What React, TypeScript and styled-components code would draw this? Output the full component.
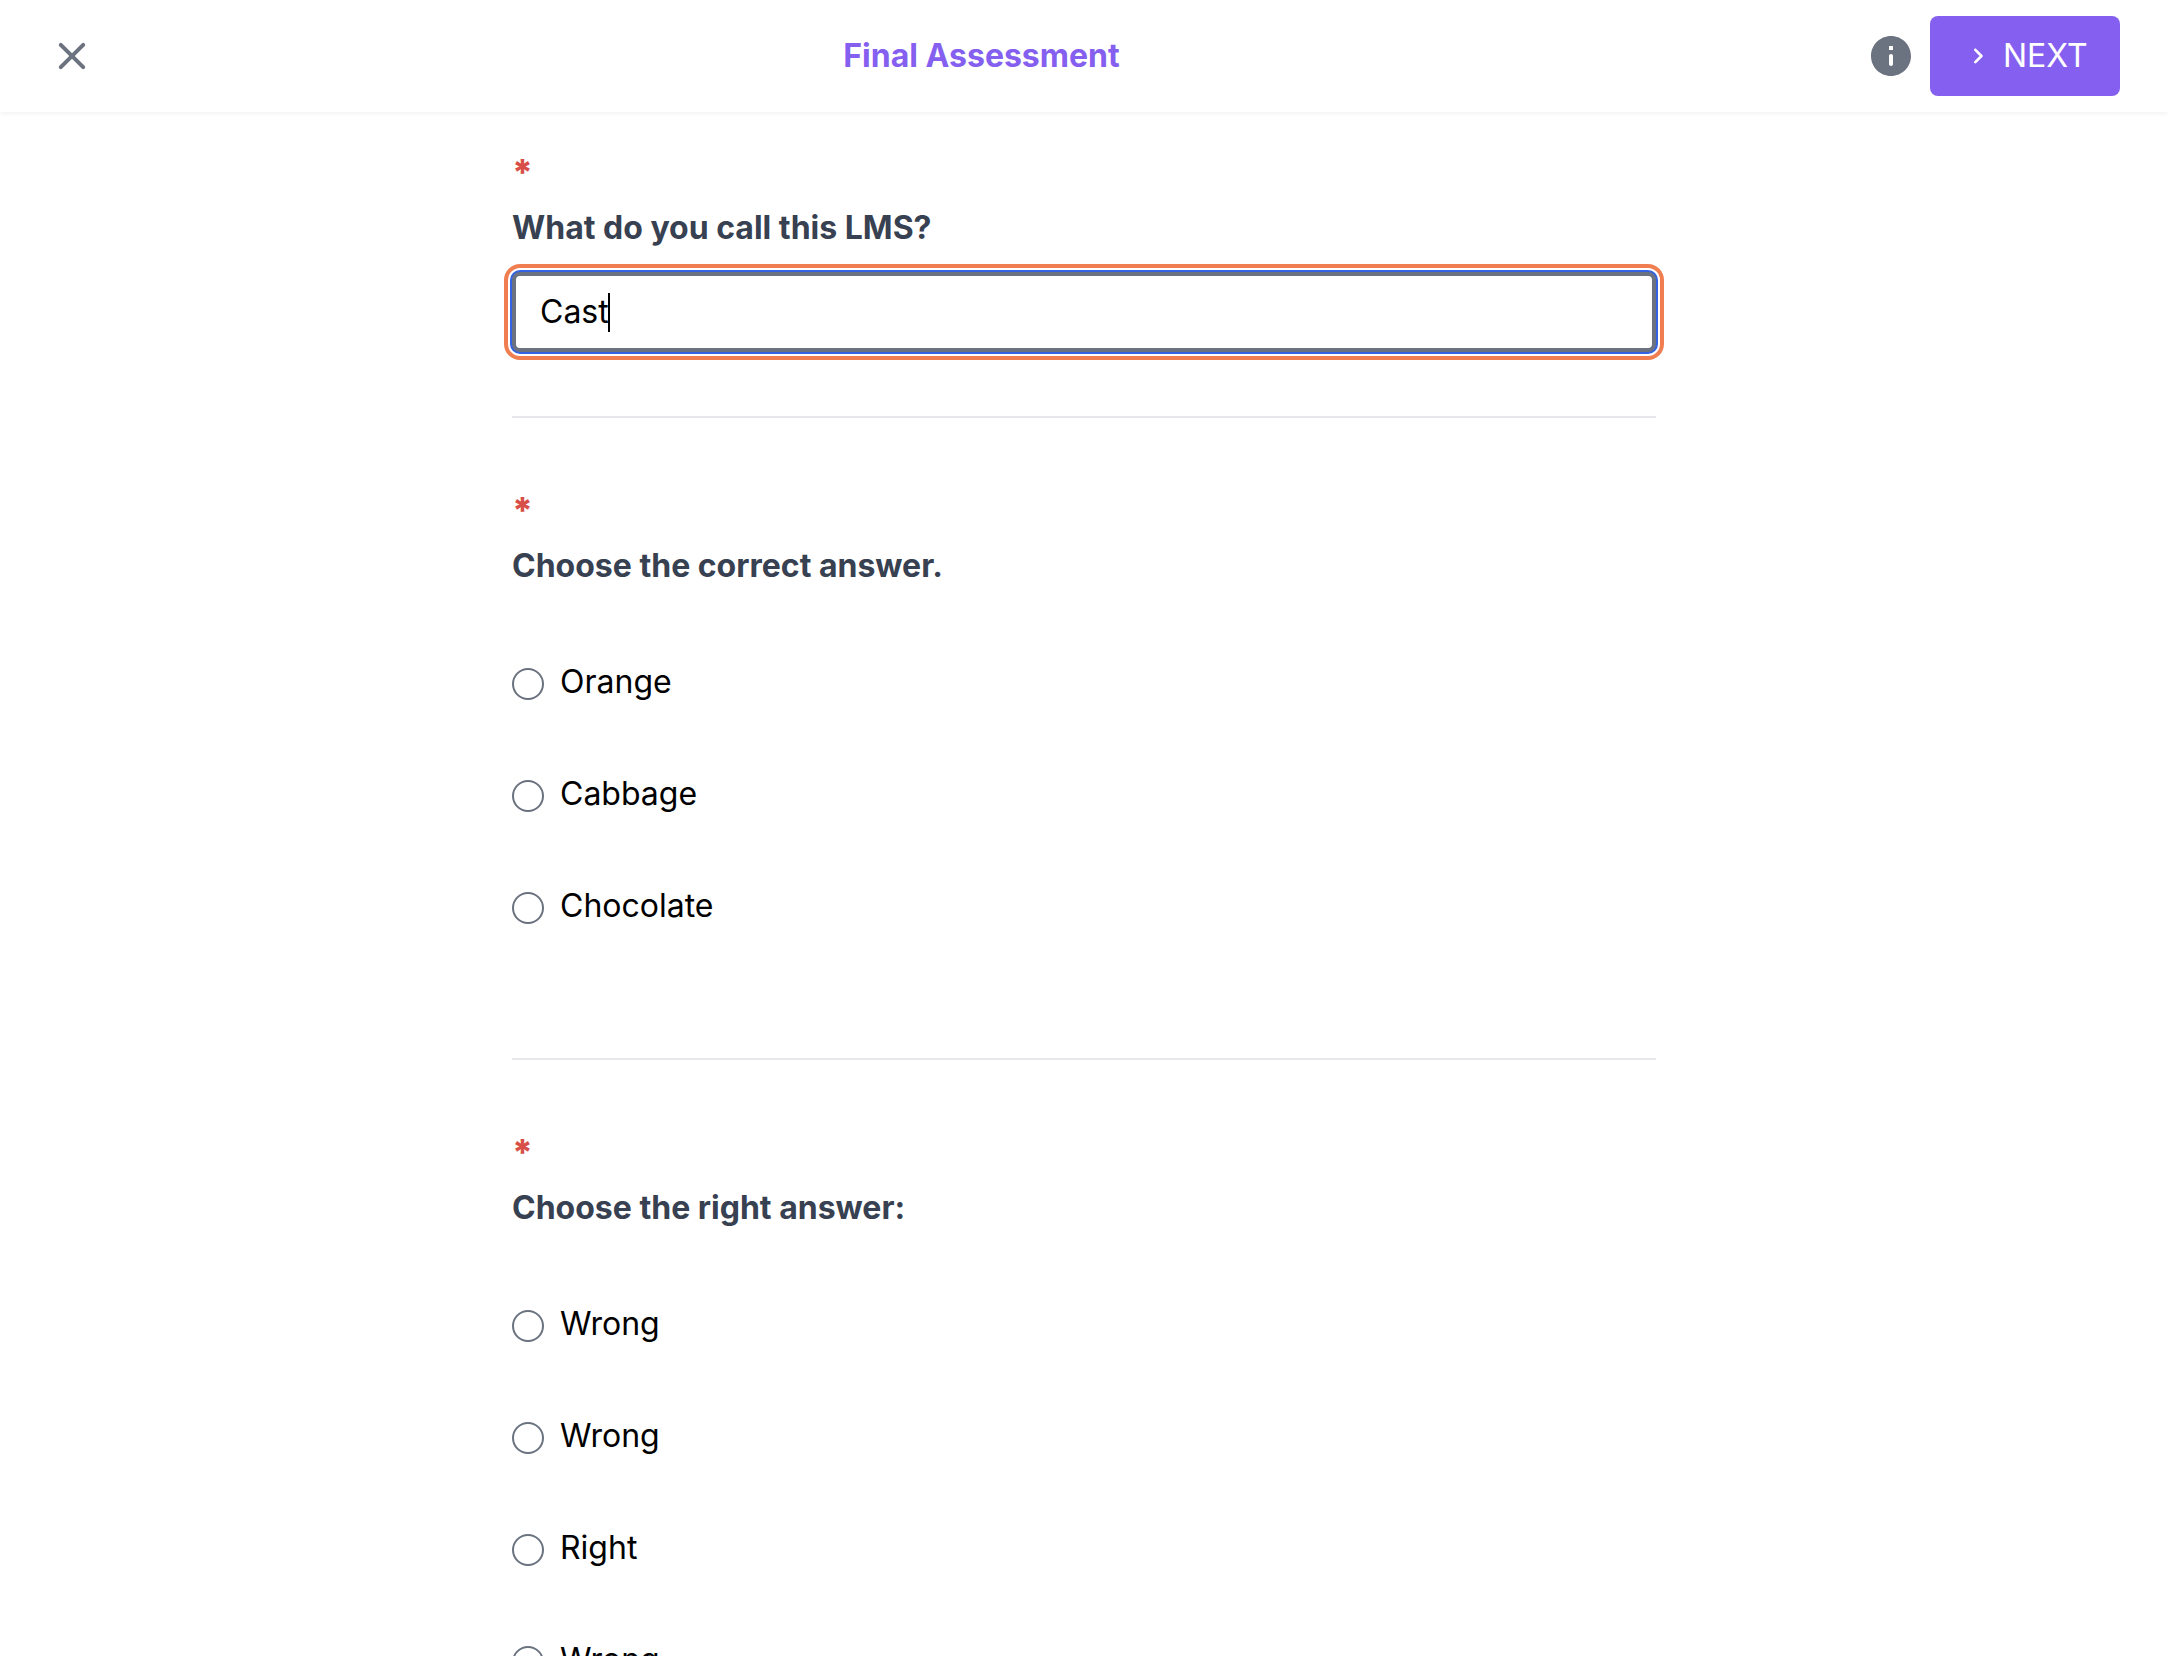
import React, { FC } from "react";
import styled, { createGlobalStyle } from "styled-components";

const GlobalStyle = createGlobalStyle`
    * {
        box-sizing: border-box;
    }
    body {
        margin: 0;
        background: #fff;
        color: #000;
        font-family: Inter, "Liberation Sans", sans-serif;
        font-size: 32px;
        line-height: 48px;
    }
`

const Page = styled.div`
    height: 100vh;
    overflow: hidden;
`

const Header = styled.header`
    display: flex;
    align-items: center;
    justify-content: space-between;
    height: 112px;
    padding: 0 48px;
    background: #fff;
    box-shadow: 0 2px 4px rgba(0, 0, 0, 0.05);
`

const Title = styled.h1`
    margin: 0;
    font-size: 32px;
    font-weight: 700;
    color: #855fef;
`

const Actions = styled.div`
    display: flex;
    align-items: center;
    gap: 15px;
`

const Icon = styled.svg<{ $size: number }>`
    display: block;
    flex: none;
    width: ${p => p.$size}px;
    height: ${p => p.$size}px;
    fill: currentColor;
`

const IconButton = styled.button`
    padding: 0;
    border: 0;
    background: none;
    color: #6b7280;
`

const NextButton = styled.button`
    display: flex;
    align-items: center;
    gap: 9px;
    width: 190px;
    height: 80px;
    padding: 0 24px 0 32px;
    border: 0;
    border-radius: 8px;
    background: #855fef;
    color: #fff;
    font: inherit;
    font-weight: 400;
    white-space: nowrap;
`

const Form = styled.main`
    width: 1144px;
    margin: 0 auto;
    padding-top: 34px;
`

const Section = styled.section`
    & + & {
        margin-top: 66px;
    }
`

const Required = styled.div`
    height: 48px;
    font-size: 36px;
    font-weight: 800;
    line-height: 52px;
    color: #d84f48;
`

const Question = styled.h2`
    margin: 10px 0 0;
    font-size: 32px;
    font-weight: 700;
    color: #374151;
`

const TextField = styled.div`
    display: flex;
    align-items: center;
    height: 80px;
    margin: 20px 0 64px;
    padding: 0 24px;
    border: 4px solid #6b7280;
    border-radius: 8px;
    background: #fff;
    box-shadow: 0 0 0 2px #3562e3;
    outline: 4px solid #f07e51;
    outline-offset: 4px;
`

const Caret = styled.span`
    width: 2px;
    height: 39px;
    margin-left: -1px;
    background: #000;
`

const Options = styled.div`
    display: flex;
    flex-direction: column;
    gap: 64px;
    padding: 68px 0 128px;
`

const Option = styled.label`
    display: flex;
    align-items: flex-start;
    gap: 16px;
`

const Radio = styled.input`
    appearance: none;
    flex: none;
    width: 32px;
    height: 32px;
    margin: 10px 0 0;
    border: 2px solid #6b7280;
    border-radius: 50%;
    background: #fff;
`

const Divider = styled.hr`
    height: 2px;
    margin: 0;
    border: 0;
    background: #e5e7eb;
`

interface IChoice {
    title: string,
    name: string,
    options: string[]
}

const choices: IChoice[] = [
    { title: "Choose the correct answer.", name: "q2", options: ["Orange", "Cabbage", "Chocolate"] },
    { title: "Choose the right answer:", name: "q3", options: ["Wrong", "Wrong", "Right", "Wrong"] },
];

const ChoiceQuestion: FC<IChoice> = ({ title, name, options }) => {
    return <Section>
        <Required>*</Required>
        <Question>{title}</Question>
        <Options>
            {options.map((option, key) => <Option key={key}>
                <Radio type="radio" name={name} />
                <span>{option}</span>
            </Option>)}
        </Options>
        <Divider />
    </Section>
}

const App: FC = () => {
    return <Page>
        <GlobalStyle />
        <Header>
            <IconButton aria-label="Close">
                <Icon $size={48} viewBox="0 0 24 24">
                    <path d="M18.3 5.71c-.39-.39-1.02-.39-1.41 0L12 10.59 7.11 5.7c-.39-.39-1.02-.39-1.41 0-.39.39-.39 1.02 0 1.41L10.59 12 5.7 16.89c-.39.39-.39 1.02 0 1.41.39.39 1.02.39 1.41 0L12 13.41l4.89 4.89c.39.39 1.02.39 1.41 0 .39-.39.39-1.02 0-1.41L13.41 12l4.89-4.89c.38-.38.38-1.02 0-1.4z" />
                </Icon>
            </IconButton>
            <Title>Final Assessment</Title>
            <Actions>
                <IconButton aria-label="Info">
                    <Icon $size={48} viewBox="0 0 24 24">
                        <path d="M12 2C6.48 2 2 6.48 2 12s4.48 10 10 10 10-4.48 10-10S17.52 2 12 2zm0 15c-.55 0-1-.45-1-1v-4c0-.55.45-1 1-1s1 .45 1 1v4c0 .55-.45 1-1 1zm1-8h-2V7h2v2z" />
                    </Icon>
                </IconButton>
                <NextButton>
                    <Icon $size={32} viewBox="0 0 24 24">
                        <path d="M9.29 6.71c-.39.39-.39 1.02 0 1.41L13.17 12l-3.88 3.88c-.39.39-.39 1.02 0 1.41.39.39 1.02.39 1.41 0l4.59-4.59c.39-.39.39-1.02 0-1.41L10.7 6.7c-.38-.38-1.02-.38-1.41.01z" />
                    </Icon>
                    NEXT
                </NextButton>
            </Actions>
        </Header>
        <Form>
            <Section>
                <Required>*</Required>
                <Question>What do you call this LMS?</Question>
                <TextField>Cast<Caret /></TextField>
                <Divider />
            </Section>
            {choices.map((choice) => <ChoiceQuestion key={choice.name} {...choice} />)}
        </Form>
    </Page>
}

export default App
